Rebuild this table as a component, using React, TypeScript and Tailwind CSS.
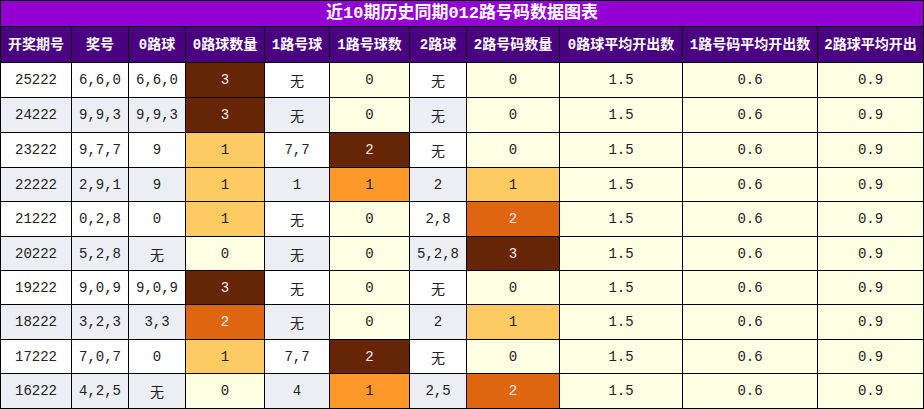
import React from "react";

const headers = [
  "开奖期号",
  "奖号",
  "0路球",
  "0路球数量",
  "1路号球",
  "1路号球数",
  "2路球",
  "2路号码数量",
  "0路球平均开出数",
  "1路号码平均开出数",
  "2路球平均开出",
];

type Row = [string, string, string, number, string, number, string, number];

const rows: Row[] = [
  ["25222", "6,6,0", "6,6,0", 3, "无", 0, "无", 0],
  ["24222", "9,9,3", "9,9,3", 3, "无", 0, "无", 0],
  ["23222", "9,7,7", "9", 1, "7,7", 2, "无", 0],
  ["22222", "2,9,1", "9", 1, "1", 1, "2", 1],
  ["21222", "0,2,8", "0", 1, "无", 0, "2,8", 2],
  ["20222", "5,2,8", "无", 0, "无", 0, "5,2,8", 3],
  ["19222", "9,0,9", "9,0,9", 3, "无", 0, "无", 0],
  ["18222", "3,2,3", "3,3", 2, "无", 0, "2", 1],
  ["17222", "7,0,7", "0", 1, "7,7", 2, "无", 0],
  ["16222", "4,2,5", "无", 0, "4", 1, "2,5", 2],
];

const rowHeights = [
  "h-[35px]",
  "h-[35px]",
  "h-[35px]",
  "h-[34px]",
  "h-[35px]",
  "h-[34px]",
  "h-[34px]",
  "h-[35px]",
  "h-[34px]",
  "h-[34px]",
];

const gridCols =
  "grid grid-cols-[71px_57px_57px_79px_65px_80px_57px_93px_123px_135px_105px]";

const heat3: Record<number, string> = {
  0: "bg-[#FFFFE3] text-[#222]",
  1: "bg-[#FECB63] text-[#222]",
  2: "bg-[#E06511] text-[#f4f4f4]",
  3: "bg-[#662506] text-[#eeeeee]",
};
const heat2: Record<number, string> = {
  0: "bg-[#FFFFE3] text-[#222]",
  1: "bg-[#FE9929] text-[#222]",
  2: "bg-[#662506] text-[#eeeeee]",
};

const font = "font-['Liberation_Mono','Noto_Sans_CJK_SC',monospace]";

export default function App() {
  return (
    <div className={`w-[924px] border border-black ${font}`}>
      <div className="h-[26px] border-b border-black bg-[#9400D3] flex items-center justify-center text-white font-bold text-[17px] leading-none">
        近10期历史同期012路号码数据图表
      </div>
      <div className={`${gridCols} h-[36px] bg-[#4B0082]`}>
        {headers.map((h, i) => (
          <div
            key={i}
            className={`flex items-center justify-center border-b border-black text-white font-bold text-[14px] leading-none whitespace-nowrap ${
              i < headers.length - 1 ? "border-r" : ""
            }`}
          >
            {h}
          </div>
        ))}
      </div>
      {rows.map((r, ri) => {
        const stripe = ri % 2 === 0 ? "bg-white" : "bg-[#EBEEF2]";
        const last = ri === rows.length - 1;
        const cells: { text: string; cls: string }[] = [
          { text: r[0], cls: stripe + " text-[#222]" },
          { text: r[1], cls: stripe + " text-[#222]" },
          { text: r[2], cls: stripe + " text-[#222]" },
          { text: String(r[3]), cls: heat3[r[3]] },
          { text: r[4], cls: stripe + " text-[#222]" },
          { text: String(r[5]), cls: heat2[r[5]] },
          { text: r[6], cls: stripe + " text-[#222]" },
          { text: String(r[7]), cls: heat3[r[7]] },
          { text: "1.5", cls: "bg-[#FFFFE3] text-[#222]" },
          { text: "0.6", cls: "bg-[#FFFFE3] text-[#222]" },
          { text: "0.9", cls: "bg-[#FFFFE3] text-[#222]" },
        ];
        return (
          <div key={ri} className={`${gridCols} ${rowHeights[ri]}`}>
            {cells.map((c, ci) => (
              <div
                key={ci}
                className={`flex items-center justify-center border-black text-[14px] leading-none whitespace-nowrap ${c.cls} ${
                  ci < cells.length - 1 ? "border-r" : ""
                } ${last ? "" : "border-b"}`}
              >
                {c.text === "无" ? (
                  <span className="translate-y-[2px]">{c.text}</span>
                ) : (
                  c.text
                )}
              </div>
            ))}
          </div>
        );
      })}
    </div>
  );
}
